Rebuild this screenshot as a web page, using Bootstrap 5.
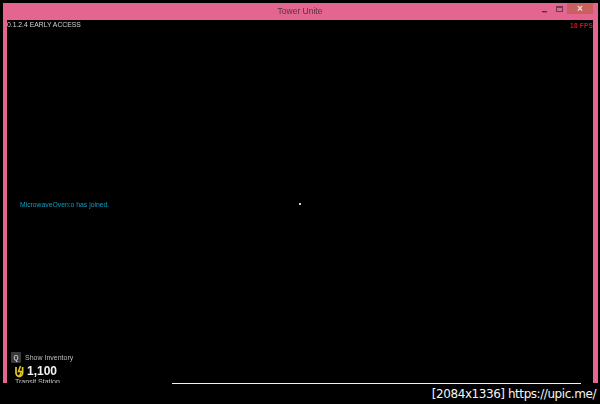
<!DOCTYPE html>
<html lang="en">
<head>
<meta charset="utf-8">
<title>Tower Unite</title>
<link rel="stylesheet" href="https://cdn.jsdelivr.net/npm/bootstrap@5.3.0/dist/css/bootstrap.min.css">
<style>
html,body{width:600px;height:404px;overflow:hidden;background:#000;font-family:"Liberation Sans",Arial,sans-serif}
.shot{width:600px;height:404px}
.win{height:380px;margin:3px 2px 0 3px;background:#e4658f;padding:0 5px 0 4px}
.win-title{height:17px;position:relative;color:#5a3045;font-size:8.5px;line-height:17px}
.win-title,.game{filter:blur(.35px)}
.win-btns{position:absolute;right:0;top:0;height:11px}
.wb{width:15px;height:11px}
.wb-min{padding-top:3px}
.wb-max{padding-top:1px}
.wb-close{width:26px;height:11px;background:#c9605f;color:#f3dcd8;font-size:10px;line-height:11px;font-weight:700}
.game{height:363px;background:#000;overflow:hidden;position:relative}
.ver{font-size:6.8px;line-height:8px;color:#d2d2d2;padding-top:1px}
.fps{font-size:6.5px;line-height:8px;color:#c21a1a;font-weight:700;padding:2px 0 0 0;letter-spacing:.2px}
.mid{height:179px;padding:0 0 0 13px}
.joined{font-size:6.8px;line-height:8px;color:#0f9fc0;width:279px}
.dot{width:2px;height:2px;background:#d8d8d8}
.hud{padding-left:4px;margin-top:143px}
.key{width:10px;height:11px;background:#3a3a3a;color:#c8c8c8;font-size:6.5px;line-height:11px;font-weight:700;border-radius:1px;margin-right:4px}
.inv{font-size:7px;line-height:11px;color:#bdbdbd}
.money{font-size:12px;line-height:14px;font-weight:700;color:#f2f2f2;margin-top:1px;padding-left:4px}
.coin{margin-right:3px}
.place{font-size:7px;line-height:9px;color:#c4c4c4;margin-top:-1px;padding-left:4px}
.foot{height:21px}
.rule{height:1px;background:#f2f2f2;margin-left:172px;width:409px}
.stamp{font-family:"DejaVu Sans",sans-serif;font-size:12px;line-height:19px;color:#f4f4f4;text-align:right;padding-right:4px;padding-top:1px;white-space:nowrap;letter-spacing:-.44px}
</style>
</head>
<body class="m-0">
<div class="shot d-flex flex-column">
  <div class="win d-flex flex-column flex-shrink-0">
    <div class="win-title text-center flex-shrink-0">
      Tower Unite
      <div class="win-btns d-flex">
        <div class="wb wb-min d-flex align-items-center justify-content-center"><svg width="6" height="5" viewBox="0 0 6 5"><rect x="0" y="3" width="5" height="1.400" fill="#5a3046"/></svg></div>
        <div class="wb wb-max d-flex align-items-center justify-content-center"><svg width="8" height="7" viewBox="0 0 8 7"><rect x=".5" y=".5" width="6" height="5" fill="none" stroke="#6a3c52"/><rect x=".5" y=".5" width="6" height="1.500" fill="#6a3c52"/></svg></div>
        <div class="wb-close text-center">×</div>
      </div>
    </div>
    <div class="game d-flex flex-column flex-shrink-0">
      <div class="d-flex justify-content-between flex-shrink-0">
        <div class="ver">0.1.2.4 EARLY ACCESS</div>
        <div class="fps">18 FPS</div>
      </div>
      <div class="mid d-flex align-items-end flex-shrink-0">
        <div class="joined">MicrowaveOven:o has joined.</div>
        <div class="dot mb-1"></div>
      </div>
      <div class="hud flex-shrink-0">
        <div class="d-flex align-items-center">
          <div class="key text-center">Q</div>
          <div class="inv">Show Inventory</div>
        </div>
        <div class="money d-flex align-items-center">
          <svg class="coin" width="9" height="13" viewBox="0 0 9 13"><path d="M1 2v6a3.300 3.300 0 0 0 6.600 0V2" fill="none" stroke="#e8c81e" stroke-width="1.700"/><path d="M5.500 1 3.500 6.500h3L4 12" fill="none" stroke="#e8c81e" stroke-width="1.500"/></svg>
          <span>1,100</span>
        </div>
        <div class="place">Transit Station</div>
      </div>
    </div>
  </div>
  <div class="foot">
    <div class="rule"></div>
    <div class="stamp">[2084x1336] https://upic.me/</div>
  </div>
</div>
<script src="https://cdn.jsdelivr.net/npm/bootstrap@5.3.0/dist/js/bootstrap.bundle.min.js"></script>
</body>
</html>
